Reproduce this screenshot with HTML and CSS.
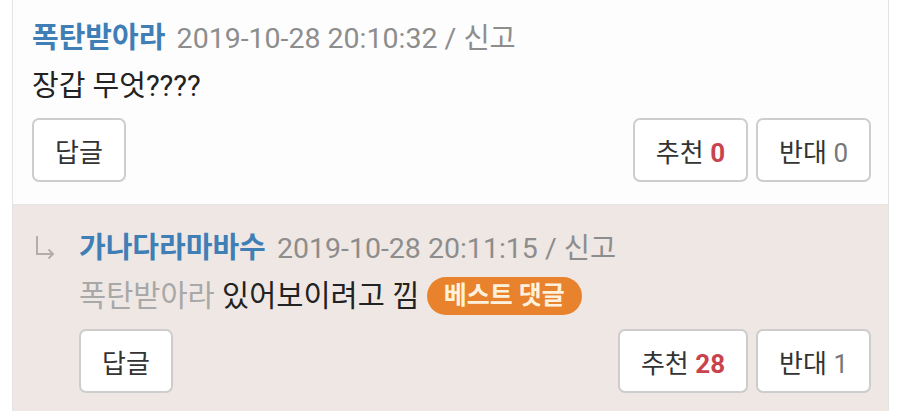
FILE: index.html
```html
<!DOCTYPE html>
<html lang="ko">
<head>
<meta charset="utf-8">
<link rel="stylesheet" href="styles.css">
</head>
<body>
<div class="card">
  <div class="comment">
    <div class="meta"><span class="name">폭탄받아라</span> <span class="time">2019-10-28 20:10:32 / 신고</span></div>
    <div class="text">장갑 무엇????</div>
    <div class="actions">
      <button class="btn">답글</button>
      <div class="votes">
        <button class="btn">추천 <b class="up">0</b></button>
        <button class="btn">반대 <span class="down">0</span></button>
      </div>
    </div>
  </div>
  <div class="comment sub">
    <div class="arrow"><svg width="22" height="26" viewBox="0 0 22 26"><path d="M2 1 V19 H18" fill="none" stroke="#b3aeac" stroke-width="2"/><path d="M13.5 14.5 L18 19 L13.5 23.5" fill="none" stroke="#b3aeac" stroke-width="2"/></svg></div>
    <div class="body">
      <div class="meta"><span class="name">가나다라마바수</span> <span class="time">2019-10-28 20:11:15 / 신고</span></div>
      <div class="text"><span class="target">폭탄받아라</span> 있어보이려고 낌 <span class="badge">베스트 댓글</span></div>
      <div class="actions">
        <button class="btn">답글</button>
        <div class="votes">
          <button class="btn">추천 <b class="up">28</b></button>
          <button class="btn">반대 <span class="down">1</span></button>
        </div>
      </div>
    </div>
  </div>
</div>
</body>
</html>
```

FILE: styles.css
```css
* { box-sizing: border-box; }
html, body { margin: 0; padding: 0; }
body {
  background: #ffffff;
  font-family: Roboto, "Noto Sans CJK KR", sans-serif;
  color: #222;
  width: 900px;
  height: 411px;
  overflow: hidden;
}
.card {
  margin: 0 11px 0 12px;
  border-left: 1px solid #e4e4e4;
  border-right: 1px solid #e4e4e4;
  background: #fdfdfd;
}
.comment {
  padding: 16px 17px 22px 19px;
  border-bottom: 1px solid #e6e6e6;
}
.meta {
  font-size: 29px;
  line-height: 44px;
  white-space: nowrap;
}
.name {
  color: #3f7fb6;
  font-weight: 700;
  margin-right: 4px;
}
.time { color: #8d8d8d; font-size: 28.5px; }
.text {
  font-size: 29px;
  line-height: 50px;
  white-space: pre;
  display: flex;
  align-items: center;
}
.actions {
  display: flex;
  justify-content: space-between;
  margin-top: 7px;
}
.votes { display: flex; gap: 8px; }
.btn {
  height: 64px;
  border: 2px solid #cdcdcd;
  border-radius: 7px;
  background: #fff;
  font-family: Roboto, "Noto Sans CJK KR", sans-serif;
  font-size: 26px;
  color: #333;
  padding: 0 21px;
}
.up { color: #c8434d; font-weight: 700; }
.down { color: #777; }
.sub {
  background: #efe7e3;
  display: flex;
  padding: 21px 17px 22px 22px;
  border-bottom: none;
}
.arrow {
  width: 44px;
  flex: none;
  padding-top: 9px;
}
.arrow svg { display: block; }
.body { flex: 1; }
.sub .text { font-size: 29.5px; }
.target { color: #a8a8a8; }
.badge {
  display: inline-flex;
  align-items: center;
  height: 38px;
  padding: 0 17px;
  margin-left: 0;
  border-radius: 19px;
  background: #e8822d;
  color: #fdf1dd;
  font-size: 25px;
  font-weight: 700;
}
.sub .actions { margin-top: 8px; }
```
